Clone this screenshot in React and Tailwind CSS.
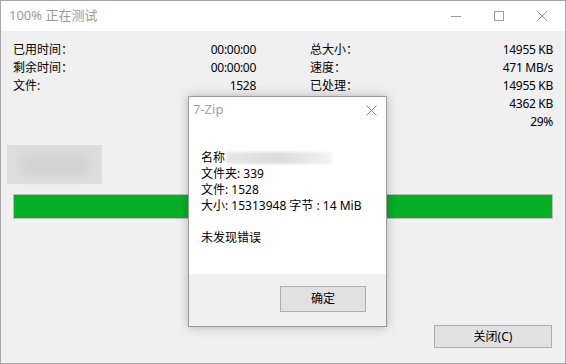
import React from 'react';

const font = { fontFamily: '"Noto Sans", "Noto Sans CJK SC", sans-serif' };

const leftRows = [
  ['已用时间：', '00:00:00'],
  ['剩余时间：', '00:00:00'],
  ['文件:', '1528'],
];

const rightRows = [
  ['总大小：', '14955 KB'],
  ['速度：', '471 MB/s'],
  ['已处理：', '14955 KB'],
  ['', '4362 KB'],
  ['', '29%'],
];

function Row({ label, value }) {
  return (
    <div className="flex justify-between h-[18px] items-center">
      <span>{label}</span>
      <span className="tracking-[-0.3px]">{value}</span>
    </div>
  );
}

function Dialog() {
  return (
    <div className="absolute left-[187px] top-[95px] w-[199px] h-[231px] bg-white border border-[#9a9a9a] shadow-[0_0_10px_rgba(0,0,0,0.25)] flex flex-col text-[12px] text-black">
      <div className="h-[24px] flex items-center justify-between pl-[4px] pr-[9px] pt-[2px]">
        <span className="text-[#a0a0a0] text-[13px]">7-Zip</span>
        <svg width="11" height="11" viewBox="0 0 11 11">
          <path d="M0.5 0.5L10.5 10.5M10.5 0.5L0.5 10.5" stroke="#888" strokeWidth="1" />
        </svg>
      </div>
      <div className="flex-1 pl-[12px] pt-[29px] leading-[16px]">
        <div className="flex items-center">
          <span>名称</span>
          <span className="ml-[1px] w-[106px] h-[12px] bg-gradient-to-r from-[#e8e8e8] via-[#dcdcdc] to-[#f4f4f4] blur-[1px]" />
        </div>
        <div>文件夹: 339</div>
        <div>文件: 1528</div>
        <div>大小: 15313948 字节 : 14 MiB</div>
        <div className="h-[16px]" />
        <div>未发现错误</div>
      </div>
      <div className="h-[52px] bg-[#f0f0f0] pt-[12px] pl-[91px]">
        <button className="w-[86px] h-[26px] bg-[#e1e1e1] border border-[#adadad] text-[12px]" style={font}>
          确定
        </button>
      </div>
    </div>
  );
}

export default function App() {
  return (
    <div className="relative w-[566px] h-[364px] border border-[#a6a6a6] flex flex-col overflow-hidden text-[12px] text-black" style={font}>
      {/* title bar */}
      <div className="h-[30px] bg-white flex items-center shrink-0">
        <span className="pl-[8px] text-[13px] text-[#9a9a9a] flex-1">100% 正在测试</span>
        <div className="flex items-center h-full">
          <div className="w-[46px] h-full flex items-center justify-center">
            <svg width="10" height="10" viewBox="0 0 10 10">
              <path d="M0 5.5H10" stroke="#999" strokeWidth="1" />
            </svg>
          </div>
          <div className="w-[40px] h-full flex items-center justify-center">
            <svg width="10" height="10" viewBox="0 0 10 10">
              <rect x="0.5" y="0.5" width="9" height="9" fill="none" stroke="#999" strokeWidth="1" />
            </svg>
          </div>
          <div className="w-[46px] h-full flex items-center justify-center">
            <svg width="10" height="10" viewBox="0 0 10 10">
              <path d="M0 0L10 10M10 0L0 10" stroke="#999" strokeWidth="1" />
            </svg>
          </div>
        </div>
      </div>

      {/* body */}
      <div className="flex-1 bg-[#f0f0f0] px-[12px] pt-[10px] flex flex-col">
        <div className="flex gap-[54px]">
          <div className="w-[243px]">
            {leftRows.map(([l, v]) => (
              <Row key={l} label={l} value={v} />
            ))}
          </div>
          <div className="w-[243px]">
            {rightRows.map(([l, v], i) => (
              <Row key={i} label={l} value={v} />
            ))}
          </div>
        </div>

        <div className="ml-[-6px] mt-[14px] w-[95px] h-[39px] bg-[#dedede] flex items-center justify-center">
          <div className="w-[70px] h-[22px] bg-[#d2d2d2] blur-[6px]" />
        </div>

        <div className="mt-[10px] h-[25px] border border-[#bcbcbc] bg-[#e6e6e6]">
          <div className="h-full w-full bg-[#06b025]" />
        </div>

        <div className="flex justify-end mt-[106px] pr-[1px]">
          <button className="w-[118px] h-[23px] bg-[#e1e1e1] border border-[#adadad] text-[12px]" style={font}>
            关闭(C)
          </button>
        </div>
      </div>

      <Dialog />
    </div>
  );
}
